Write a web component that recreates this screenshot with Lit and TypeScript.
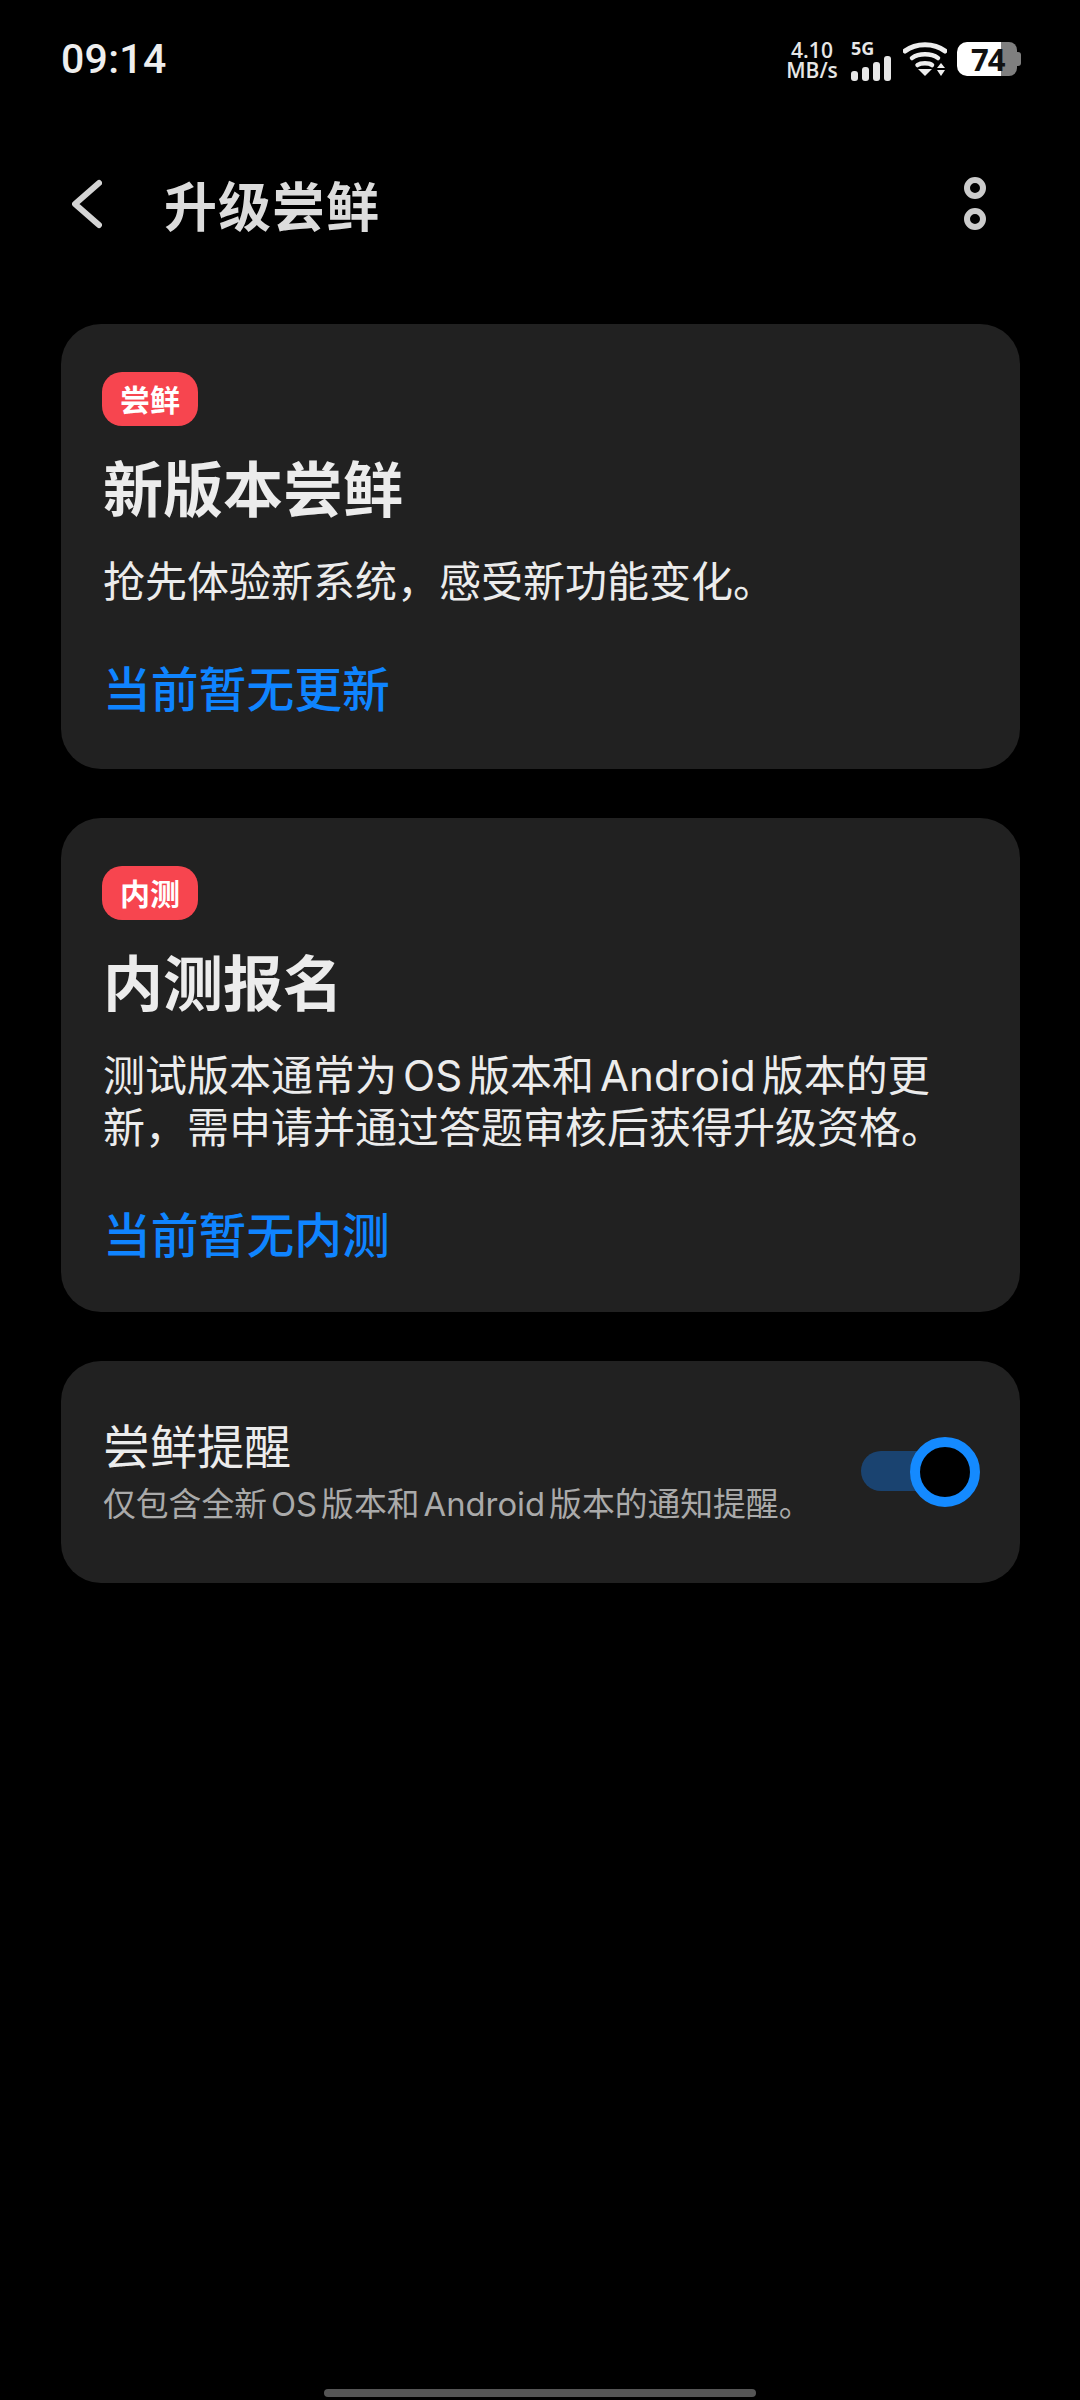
import { LitElement, html, css, svg } from "lit";
import { customElement } from "lit/decorators.js";

@customElement("app-root")
export class AppRoot extends LitElement {
  static styles = css`
    :host { display: block; width: 1080px; height: 2400px; background: #000; color: #eee; position: relative; overflow: hidden; font-family: "Noto Sans CJK SC", "Noto Sans", sans-serif; }
    .status { height: 116px; box-sizing: border-box; padding: 0 59px 0 61px; display: flex; justify-content: space-between; align-items: center; }
    .time { font: 500 41px/1 Roboto, sans-serif; color: #eee; margin-top: 2px; letter-spacing: 0.3px; }
    .sys { display: flex; align-items: center; height: 36px; margin-top: 2px; }
    .speed { font: 600 21px/20px "Open Sans", Roboto, sans-serif; text-align: center; color: #e6e6e6; width: 52px; margin-right: 10px; margin-top: 2px; }
    .speed div { height: 20px; }
    .net { width: 26px; margin-right: 26px; margin-left: 3px; display: flex; flex-direction: column; }
    .net span { font: 700 18px/16px "Open Sans", Roboto, sans-serif; color: #e6e6e6; margin-top: 2px; }
    .wifi { margin-right: 10px; display: block; }
    .batt { width: 64px; height: 34px; position: relative; display: flex; }
    .batt .lvl { width: 44px; height: 34px; background: #fff; border-radius: 10px 0 0 10px; }
    .batt .rest { width: 16px; height: 34px; background: #7f7f7f; border-radius: 0 8px 8px 0; }
    .batt .nub { width: 4px; height: 14px; margin-top: 10px; background: #7f7f7f; border-radius: 0 3px 3px 0; }
    .batt .num { position: absolute; left: 14px; top: 0; font: 700 31px/34px "Open Sans", Roboto, sans-serif; color: #111; letter-spacing: -1px; }
    .head { height: 180px; box-sizing: border-box; padding: 0 93px 4px 72px; display: flex; align-items: center; }
    .back { display: block; margin-right: 62px; }
    .head h1 { margin: 0; flex: 1; font-size: 53px; line-height: 1; font-weight: 600; color: #dcdcdc; letter-spacing: 1px; }
    .more { display: block; }
    .cards { display: flex; flex-direction: column; gap: 49px; padding: 28px 60px 0 61px; }
    .card { background: #212121; border-radius: 40px; padding: 48px 40px 0 42px; box-sizing: border-box; }
    .c1 { height: 445px; }
    .c2 { height: 494px; }
    .tag { width: 96px; height: 54px; margin-left: -1px; border-radius: 20px; background: #f7454f; color: #fff; font-size: 30px; font-weight: 700; line-height: 52px; text-align: center; }
    h2 { margin: 24px 0 0; font-size: 60px; line-height: 72px; font-weight: 700; color: #ececec; }
    p { margin: 32px 0 0; font-size: 42px; line-height: 49px; color: #ececec; font-weight: 400; }
    .en { font-family: Inter, Roboto, sans-serif; margin: 0 6px; }
    .link { margin-top: 54px; font-size: 47.8px; line-height: 60px; color: #0f84ff; font-weight: 500; }
    .row { height: 222px; padding: 0 40px 0 42px; display: flex; align-items: center; justify-content: space-between; }
    .row .t { font-size: 47px; line-height: 56px; color: #ececec; margin-top: -2px; }
    .row .s { font-size: 32.8px; line-height: 44px; color: #aaa; margin-top: 8px; white-space: nowrap; }
    .row .s .en { margin: 0 4px; font-weight: 400; }
    .switch { position: relative; width: 119px; height: 70px; flex: none; }
    .track { position: absolute; left: 0; top: 14px; width: 90px; height: 40px; border-radius: 20px; background: #1a4370; }
    .thumb { position: absolute; right: 0; top: 0; width: 70px; height: 70px; box-sizing: border-box; border-radius: 50%; border: 10px solid #148aff; background: #000; }
    .bar { position: absolute; left: 324px; bottom: 3px; width: 432px; height: 8px; border-radius: 4px; background: #555; }
  `;

  private signal() {
    const bars = [[0, 10], [11, 14], [22, 19], [33, 25]];
    return html`<svg width="40" height="25" viewBox="0 0 40 25" style="display:block">
      ${bars.map(([x, h]) => svg`<rect x=${x} y=${25 - h} width="7" height=${h} rx="3" fill="#e6e6e6"/>`)}
    </svg>`;
  }

  render() {
    return html`
      <div class="status">
        <div class="time">09:14</div>
        <div class="sys">
          <div class="speed"><div>4.10</div><div>MB/s</div></div>
          <div class="net"><span>5G</span>${this.signal()}</div>
          <svg class="wifi" width="44" height="34" viewBox="0 0 44 34" fill="none">
            <path d="M2 9 C13 0.5 31 0.5 42 9" stroke="#eee" stroke-width="5" stroke-linecap="round"/>
            <path d="M9 16 C16 11 28 11 35 16" stroke="#eee" stroke-width="4.5" stroke-linecap="round"/>
            <path d="M14.5 23 C18 20.5 26 20.5 29 23" stroke="#eee" stroke-width="4.5" stroke-linecap="round"/>
            <path d="M15 27 H29 L22 34 Z" fill="#eee"/>
            <path d="M34 26 H42 L38 21 Z" fill="#eee"/>
            <path d="M34 28 H42 L38 34 Z" fill="#eee"/>
          </svg>
          <div class="batt">
            <div class="lvl"></div><div class="rest"></div><div class="nub"></div>
            <div class="num">74</div>
          </div>
        </div>
      </div>
      <div class="head">
        <svg class="back" width="30" height="50" viewBox="0 0 30 50" fill="none">
          <path d="M27 4 L3 25 L27 46" stroke="#d4d4d4" stroke-width="6" stroke-linecap="round" stroke-linejoin="round"/>
        </svg>
        <h1>升级尝鲜</h1>
        <svg class="more" width="24" height="54" viewBox="0 0 24 54" fill="none">
          <circle cx="12" cy="11" r="8" stroke="#ccc" stroke-width="6"/>
          <circle cx="12" cy="42" r="8" stroke="#ccc" stroke-width="6"/>
        </svg>
      </div>
      <div class="cards">
        <div class="card c1">
          <div class="tag">尝鲜</div>
          <h2>新版本尝鲜</h2>
          <p>抢先体验新系统，感受新功能变化。</p>
          <div class="link">当前暂无更新</div>
        </div>
        <div class="card c2">
          <div class="tag">内测</div>
          <h2>内测报名</h2>
          <p>测试版本通常为<span class="en">OS</span>版本和<span class="en">Android</span>版本的更<br />新，需申请并通过答题审核后获得升级资格。</p>
          <div class="link">当前暂无内测</div>
        </div>
        <div class="card row">
          <div>
            <div class="t">尝鲜提醒</div>
            <div class="s">仅包含全新<span class="en">OS</span>版本和<span class="en">Android</span>版本的通知提醒。</div>
          </div>
          <div class="switch"><div class="track"></div><div class="thumb"></div></div>
        </div>
      </div>
      <div class="bar"></div>
    `;
  }
}
